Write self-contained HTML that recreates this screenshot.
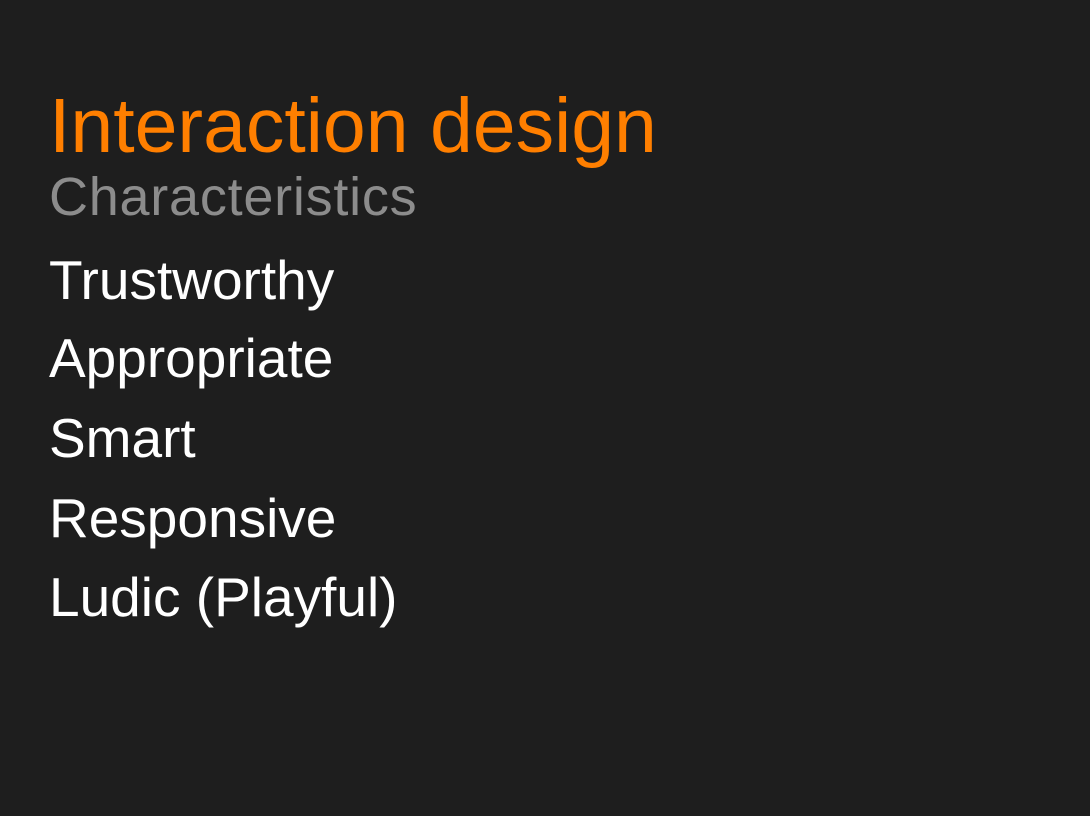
<!DOCTYPE html>
<html><head><meta charset="utf-8"><style>
html,body{margin:0;padding:0;}
body{width:1090px;height:816px;background:#1e1e1e;position:relative;overflow:hidden;font-family:"Liberation Sans",Arial,sans-serif;}
div{position:absolute;left:49px;line-height:1;white-space:nowrap;}
.t{font-size:77px;color:#ff7f00;top:88px;}
.s{font-size:54px;color:#8c8c8c;top:170px;letter-spacing:0.75px;}
.i{font-size:55px;color:#ffffff;}
</style></head><body>
<div class="t">Interaction design</div>
<div class="s">Characteristics</div>
<div class="i" style="top:253px">Trustworthy</div>
<div class="i" style="top:331px">Appropriate</div>
<div class="i" style="top:411px">Smart</div>
<div class="i" style="top:491px">Responsive</div>
<div class="i" style="top:570px">Ludic (Playful)</div>
</body></html>
